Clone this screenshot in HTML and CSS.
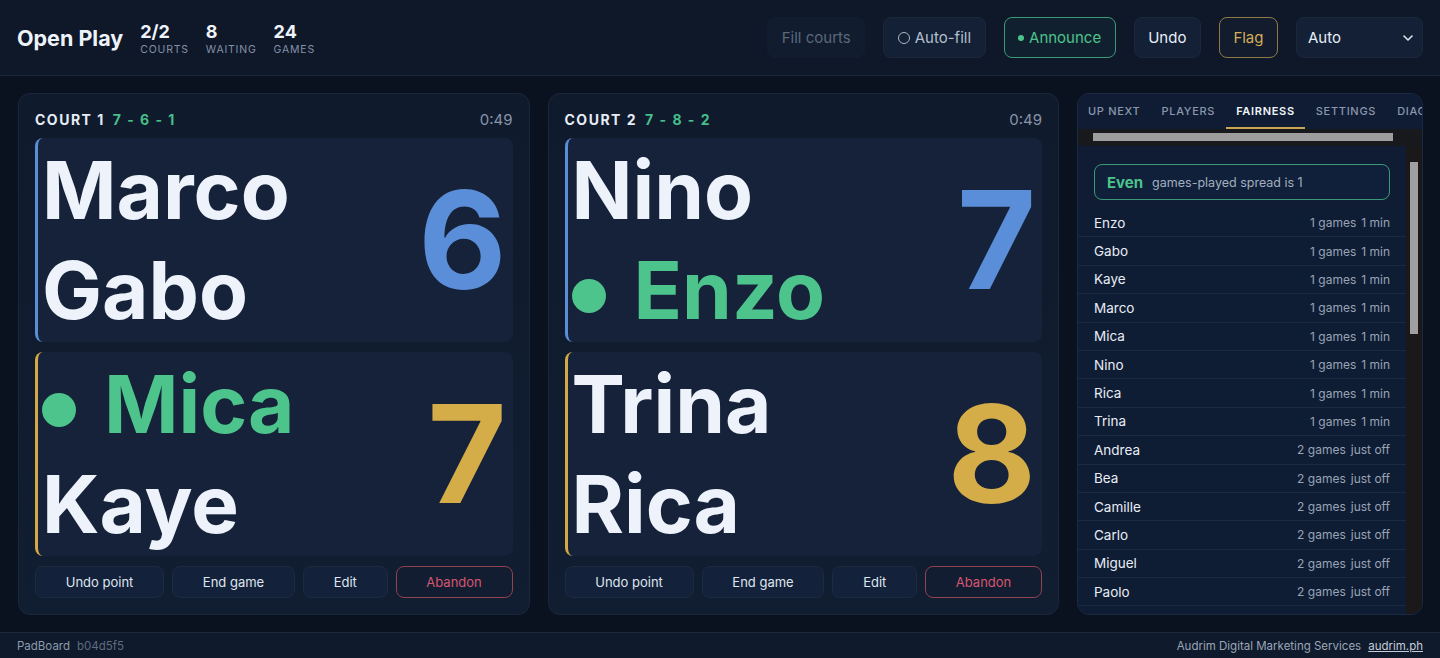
FILE: index.html
```html
<!DOCTYPE html>
<html lang="en">
<head>
<meta charset="utf-8">
<title>Open Play — PadBoard</title>
<link rel="stylesheet" href="styles.css">
</head>
<body>
<header class="topbar">
  <div class="brand">
    <h1 class="title">Open Play</h1>
    <div class="stats">
      <div class="stat"><span class="stat-num">2/2</span><span class="stat-label">Courts</span></div>
      <div class="stat"><span class="stat-num">8</span><span class="stat-label">Waiting</span></div>
      <div class="stat"><span class="stat-num">24</span><span class="stat-label">Games</span></div>
    </div>
  </div>
  <div class="actions">
    <button class="btn btn-disabled">Fill courts</button>
    <button class="btn btn-muted"><span class="ring"></span>Auto-fill</button>
    <button class="btn btn-green"><span class="pip"></span>Announce</button>
    <button class="btn">Undo</button>
    <button class="btn btn-gold">Flag</button>
    <div class="select"><span>Auto</span><svg width="10" height="6" viewBox="0 0 10 6"><polyline points="1,1 5,5 9,1" fill="none" stroke="#dfe6ef" stroke-width="1.6" stroke-linecap="round" stroke-linejoin="round"/></svg></div>
  </div>
</header>

<main class="board">
  <section class="court">
    <div class="court-head">
      <span class="court-name">Court 1</span>
      <span class="court-seq">7 - 6 - 1</span>
      <span class="court-time">0:49</span>
    </div>
    <div class="team team-a">
      <div class="names">
        <div class="name">Marco</div>
        <div class="name">Gabo</div>
      </div>
      <div class="score score-a">6</div>
    </div>
    <div class="team team-b">
      <div class="names">
        <div class="name serving"><span class="dot"></span>Mica</div>
        <div class="name">Kaye</div>
      </div>
      <div class="score score-b">7</div>
    </div>
    <div class="court-actions">
      <button class="cbtn">Undo point</button>
      <button class="cbtn">End game</button>
      <button class="cbtn">Edit</button>
      <button class="cbtn cbtn-danger">Abandon</button>
    </div>
  </section>

  <section class="court">
    <div class="court-head">
      <span class="court-name">Court 2</span>
      <span class="court-seq">7 - 8 - 2</span>
      <span class="court-time">0:49</span>
    </div>
    <div class="team team-a">
      <div class="names">
        <div class="name">Nino</div>
        <div class="name serving"><span class="dot"></span>Enzo</div>
      </div>
      <div class="score score-a">7</div>
    </div>
    <div class="team team-b">
      <div class="names">
        <div class="name">Trina</div>
        <div class="name">Rica</div>
      </div>
      <div class="score score-b">8</div>
    </div>
    <div class="court-actions">
      <button class="cbtn">Undo point</button>
      <button class="cbtn">End game</button>
      <button class="cbtn">Edit</button>
      <button class="cbtn cbtn-danger">Abandon</button>
    </div>
  </section>

  <aside class="panel">
    <nav class="tabs">
      <span class="tab">Up next</span>
      <span class="tab">Players</span>
      <span class="tab active">Fairness</span>
      <span class="tab">Settings</span>
      <span class="tab">Diag</span>
    </nav>
    <div class="hscroll"><span class="hthumb"></span></div>
    <div class="panel-main">
      <div class="panel-body">
        <div class="even"><strong>Even</strong><span>games-played spread is 1</span></div>
        <ul class="fair-list">
          <li><span class="p">Enzo</span><span class="m"><span>1 games</span><span>1 min</span></span></li>
          <li><span class="p">Gabo</span><span class="m"><span>1 games</span><span>1 min</span></span></li>
          <li><span class="p">Kaye</span><span class="m"><span>1 games</span><span>1 min</span></span></li>
          <li><span class="p">Marco</span><span class="m"><span>1 games</span><span>1 min</span></span></li>
          <li><span class="p">Mica</span><span class="m"><span>1 games</span><span>1 min</span></span></li>
          <li><span class="p">Nino</span><span class="m"><span>1 games</span><span>1 min</span></span></li>
          <li><span class="p">Rica</span><span class="m"><span>1 games</span><span>1 min</span></span></li>
          <li><span class="p">Trina</span><span class="m"><span>1 games</span><span>1 min</span></span></li>
          <li><span class="p">Andrea</span><span class="m"><span>2 games</span><span>just off</span></span></li>
          <li><span class="p">Bea</span><span class="m"><span>2 games</span><span>just off</span></span></li>
          <li><span class="p">Camille</span><span class="m"><span>2 games</span><span>just off</span></span></li>
          <li><span class="p">Carlo</span><span class="m"><span>2 games</span><span>just off</span></span></li>
          <li><span class="p">Miguel</span><span class="m"><span>2 games</span><span>just off</span></span></li>
          <li><span class="p">Paolo</span><span class="m"><span>2 games</span><span>just off</span></span></li>
          <li><span class="p">Ralph</span><span class="m"><span>2 games</span><span>just off</span></span></li>
        </ul>
      </div>
      <div class="vscroll"><span class="vthumb"></span></div>
    </div>
  </aside>
</main>

<footer class="footer">
  <div class="foot-left"><span class="app">PadBoard</span><span class="hash">b04d5f5</span></div>
  <div class="foot-right"><span>Audrim Digital Marketing Services</span><a class="link">audrim.ph</a></div>
</footer>
</body>
</html>
```

FILE: styles.css
```css
* { box-sizing: border-box; }

html, body {
  margin: 0;
  height: 100%;
}

body {
  font-family: Inter, "Noto Sans", "Liberation Sans", sans-serif;
  background: #0a1220;
  color: #e8eef7;
  display: flex;
  flex-direction: column;
  height: 658px;
  overflow: hidden;
}

button {
  font-family: inherit;
  cursor: pointer;
}

/* ---------- top bar ---------- */
.topbar {
  height: 76px;
  flex: 0 0 76px;
  display: flex;
  align-items: center;
  justify-content: space-between;
  padding: 0 17px;
  background: #0e1829;
  border-bottom: 1px solid #1a2639;
}

.brand {
  display: flex;
  align-items: center;
  gap: 17px;
}

.title {
  margin: 0;
  font-size: 21.5px;
  font-weight: 700;
  color: #eef3fa;
}

.stats {
  display: flex;
  gap: 17px;
}

.stat {
  display: flex;
  flex-direction: column;
  line-height: 1;
  padding-top: 3px;
}

.stat-num {
  font-size: 18px;
  font-weight: 700;
  color: #eef3fa;
}

.stat-label {
  margin-top: 4px;
  font-size: 10.5px;
  letter-spacing: 0.8px;
  text-transform: uppercase;
  color: #8391a6;
}

.actions {
  display: flex;
  align-items: center;
  gap: 18px;
}

.btn {
  height: 41px;
  padding: 0 13.5px;
  border-radius: 8px;
  border: 1px solid #1b283c;
  background: #132035;
  color: #e8eef7;
  font-size: 15px;
  display: inline-flex;
  align-items: center;
  gap: 5px;
}

.btn-disabled {
  background: #111c2e;
  border-color: #111c2e;
  color: #5b687b;
}

.btn-muted {
  color: #b3bfce;
}

.ring {
  width: 12px;
  height: 12px;
  border: 1.5px solid #aab6c5;
  border-radius: 50%;
}

.btn-green {
  border-color: #3a9a77;
  color: #4cc48b;
  background: #11202f;
}

.pip {
  width: 6px;
  height: 6px;
  border-radius: 50%;
  background: #4cc48b;
}

.btn-gold {
  border-color: #8f7a45;
  color: #d3ae5a;
  background: #121c2c;
}

.select {
  width: 127px;
  height: 41px;
  border-radius: 8px;
  border: 1px solid #1b283c;
  background: #132035;
  color: #e8eef7;
  font-size: 15px;
  display: flex;
  align-items: center;
  justify-content: space-between;
  padding: 0 9px 0 11px;
}

/* ---------- board ---------- */
.board {
  flex: 1;
  min-height: 0;
  display: grid;
  grid-template-columns: 1fr 1fr 346px;
  gap: 18px;
  padding: 17px 17px 17px 18px;
}

.court {
  display: flex;
  flex-direction: column;
  gap: 10px;
  padding: 16px;
  background: linear-gradient(180deg, #0f1a2c 0%, #111d31 100%);
  border: 1px solid #1a273b;
  border-radius: 12px;
  min-height: 0;
}

.court-head {
  height: 18px;
  display: flex;
  align-items: center;
  gap: 8px;
  font-size: 14px;
  font-weight: 700;
  letter-spacing: 1.5px;
  text-transform: uppercase;
}

.court-name { color: #e6ecf5; }
.court-seq { color: #46bf88; }

.court-time {
  margin-left: auto;
  font-size: 15px;
  font-weight: 400;
  letter-spacing: 0;
  color: #8995a8;
}

.team {
  flex: 1;
  min-height: 0;
  display: flex;
  align-items: center;
  justify-content: space-between;
  background: #15223a;
  border-radius: 8px;
  border-left: 3px solid #5a8ed8;
  padding: 0 6px 0 4px;
  overflow: hidden;
}

.team-b { border-left-color: #d4a945; }

.names {
  font-size: 80px;
  line-height: 100px;
  font-weight: 700;
  color: #eef3fb;
  white-space: nowrap;
}

.name.serving { color: #4cc48b; }

.dot {
  display: inline-block;
  width: 34px;
  height: 34px;
  border-radius: 50%;
  background: #4cc48b;
  margin: 0 28px 0 0;
  vertical-align: 6px;
}

.score {
  font-size: 136px;
  line-height: 1;
  font-weight: 700;
}

.score-a { color: #5a8ed8; }
.score-b { color: #d4ac48; }

.court-actions {
  display: flex;
  gap: 8px;
  height: 32px;
}

.cbtn {
  flex: 1 1 auto;
  height: 32px;
  padding: 0 12px;
  border-radius: 8px;
  border: 1px solid #1d2a3f;
  background: #14213a;
  color: #dfe6ef;
  font-size: 13px;
}

.cbtn-danger {
  border-color: #93404f;
  color: #d65670;
  background: #131d31;
}

/* ---------- side panel ---------- */
.panel {
  display: flex;
  flex-direction: column;
  min-height: 0;
  background: #0f1c33;
  border: 1px solid #1b2a42;
  border-radius: 12px;
  overflow: hidden;
}

.tabs {
  flex: 0 0 auto;
  display: flex;
  gap: 1px;
  overflow: hidden;
  background: #0f1c33;
}

.tab {
  flex: 0 0 auto;
  height: 35px;
  display: flex;
  align-items: center;
  padding: 0 10px;
  font-size: 11px;
  font-weight: 500;
  letter-spacing: 0.7px;
  text-transform: uppercase;
  color: #8a98ad;
  border-bottom: 2px solid transparent;
}

.tab.active {
  color: #f0f4fa;
  font-weight: 600;
  border-bottom-color: #c9a652;
}

.hscroll {
  flex: 0 0 17px;
  height: 17px;
  background: #17191d;
  padding: 4px 29px 5px 15px;
  display: flex;
}

.hthumb {
  flex: 1;
  background: #9d9d9d;
}

.panel-main {
  flex: 1;
  min-height: 0;
  display: flex;
}

.panel-body {
  flex: 1;
  min-width: 0;
  overflow: hidden;
  padding-top: 18px;
}

.vscroll {
  flex: 0 0 16px;
  background: #1a1818;
  padding: 16px 4px 0 4px;
}

.vthumb {
  display: block;
  height: 172px;
  background: #a0a0a0;
}

.even {
  margin: 0 16px 9px;
  height: 36px;
  display: flex;
  align-items: center;
  gap: 9px;
  padding: 0 12px;
  border: 1px solid #3a9a77;
  border-radius: 8px;
  background: #10203a;
}

.even strong {
  font-size: 15px;
  font-weight: 700;
  color: #4cc48b;
}

.even span {
  font-size: 12.5px;
  color: #a3afbf;
}

.fair-list {
  list-style: none;
  margin: 0;
  padding: 0;
}

.fair-list li {
  height: 28.4px;
  display: flex;
  align-items: center;
  justify-content: space-between;
  padding: 0 16px;
  border-bottom: 1px solid #1b2a42;
  background: #0f1d34;
}

.p {
  font-size: 13.5px;
  color: #e8edf5;
}

.m {
  display: flex;
  gap: 5px;
  font-size: 12px;
  color: #98a4b5;
}

/* ---------- footer ---------- */
.footer {
  flex: 0 0 26px;
  height: 26px;
  display: flex;
  align-items: center;
  justify-content: space-between;
  padding: 0 17px;
  background: #0f1a2c;
  border-top: 1px solid #1c2a40;
  font-size: 11.5px;
}

.foot-left, .foot-right {
  display: flex;
  gap: 7px;
}

.app { color: #8e9aab; }
.hash { color: #5f6c7f; }
.foot-right span { color: #9aa6b6; }
.link {
  color: #c3ccd8;
  text-decoration: underline;
}
```
